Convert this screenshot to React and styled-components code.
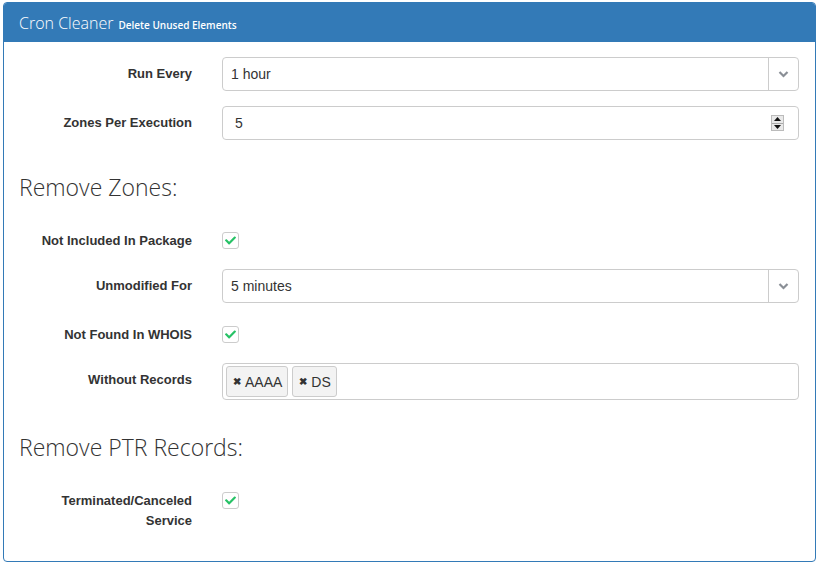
import React from 'react';
import styled, { createGlobalStyle } from 'styled-components';
import { FaCheck } from 'react-icons/fa';

const GlobalStyle = createGlobalStyle`
  body {
    margin: 0;
    background: #ffffff;
    font-family: "Liberation Sans", Arial, sans-serif;
    color: #333333;
  }
`;

const Panel = styled.section`
  margin: 2px 3px 0 3px;
  width: 813px;
  box-sizing: border-box;
  border: 1px solid #337ab7;
  border-radius: 4px;
  background: #ffffff;
  overflow: hidden;
`;

const PanelHeading = styled.header`
  display: flex;
  align-items: baseline;
  gap: 5px;
  height: 39px;
  box-sizing: border-box;
  padding: 9px 15px 0;
  background: #337ab7;
  color: #ffffff;
  font-family: "Open Sans", sans-serif;
`;

const Title = styled.h3`
  margin: 0;
  font-size: 16px;
  font-weight: 300;
`;

const Subtitle = styled.small`
  font-size: 10px;
  font-weight: 600;
`;

const PanelBody = styled.div`
  padding: 15px 16px 15px 15px;
`;

const Row = styled.div`
  display: grid;
  grid-template-columns: 173px 1fr;
  column-gap: 30px;
  align-items: ${(p) => (p.$top ? 'start' : 'center')};
  min-height: ${(p) => (p.$top ? '30px' : '34px')};
  margin-bottom: 15px;
`;

const Label = styled.label`
  text-align: right;
  font-size: 13px;
  font-weight: 700;
  line-height: 20px;
  padding-top: ${(p) => (p.$top ? '7px' : '0')};
`;

const Field = styled.div`
  position: relative;
  display: flex;
  align-items: center;
  height: 34px;
  box-sizing: border-box;
  border: 1px solid #cccccc;
  border-radius: 4px;
  background: #ffffff;
  font-size: 14px;
  color: #333333;
`;

const Value = styled.span`
  flex: 1;
  padding-left: ${(p) => p.$pad || 8}px;
`;

const Arrow = styled.span`
  display: flex;
  align-items: center;
  justify-content: center;
  width: 29px;
  height: 100%;
  border-left: 1px solid #cccccc;
`;

const Spinner = styled.span`
  display: flex;
  flex-direction: column;
  width: 13px;
  height: 16px;
  margin-right: 14px;
  border: 1px solid #bbbbbb;
  background: #e9e9e9;
  box-sizing: border-box;
  & > span {
    flex: 1;
    display: flex;
    align-items: center;
    justify-content: center;
  }
  & > span + span {
    border-top: 1px solid #aaaaaa;
  }
`;

const Heading = styled.h2`
  margin: 34px 0 24px;
  font-family: "Open Sans", sans-serif;
  font-weight: 300;
  font-size: 23px;
  line-height: 26px;
  color: #333333;
`;

const CheckWrap = styled.div`
  padding-top: 8px;
`;

const Check = styled.span`
  display: flex;
  align-items: center;
  justify-content: center;
  width: 17px;
  height: 17px;
  box-sizing: border-box;
  border: 1px solid #cccccc;
  border-radius: 3px;
  color: #27c266;
  font-size: 11px;
`;

const TagBox = styled.div`
  display: flex;
  gap: 4px;
  height: 37px;
  padding: 2px 3px;
  box-sizing: border-box;
  border: 1px solid #cccccc;
  border-radius: 4px;
`;

const Tag = styled.span`
  display: flex;
  align-items: center;
  gap: 4px;
  height: 31px;
  padding: 0 5px 0 6px;
  box-sizing: border-box;
  border: 1px solid #cccccc;
  border-radius: 3px;
  background: #f3f3f3;
  font-size: 14px;
  color: #333333;
  & > b {
    font-size: 10px;
  }
`;

const Chevron = () => (
  <svg width="11" height="8" viewBox="0 0 11 8">
    <path d="M1.5 2 L5.5 6 L9.5 2" fill="none" stroke="#8a8f96" strokeWidth="2.2" />
  </svg>
);

const Tri = ({ up }) => (
  <svg width="7" height="4" viewBox="0 0 7 4">
    <path d={up ? 'M0 4 L3.5 0 L7 4 Z' : 'M0 0 L3.5 4 L7 0 Z'} fill="#111" />
  </svg>
);

const SelectField = ({ value }) => (
  <Field>
    <Value>{value}</Value>
    <Arrow>
      <Chevron />
    </Arrow>
  </Field>
);

const CheckRow = ({ label }) => (
  <Row $top>
    <Label $top>{label}</Label>
    <CheckWrap>
      <Check>
        <FaCheck />
      </Check>
    </CheckWrap>
  </Row>
);

export default function App() {
  return (
    <>
      <GlobalStyle />
      <Panel>
        <PanelHeading>
          <Title>Cron Cleaner</Title>
          <Subtitle>Delete Unused Elements</Subtitle>
        </PanelHeading>
        <PanelBody>
          <Row>
            <Label>Run Every</Label>
            <SelectField value="1 hour" />
          </Row>
          <Row>
            <Label>Zones Per Execution</Label>
            <Field>
              <Value $pad={12}>5</Value>
              <Spinner>
                <span><Tri up /></span>
                <span><Tri /></span>
              </Spinner>
            </Field>
          </Row>

          <Heading>Remove Zones:</Heading>
          <CheckRow label="Not Included In Package" />
          <Row>
            <Label>Unmodified For</Label>
            <SelectField value="5 minutes" />
          </Row>
          <CheckRow label="Not Found In WHOIS" />
          <Row $top>
            <Label $top>Without Records</Label>
            <TagBox>
              <Tag><b>✖</b>AAAA</Tag>
              <Tag><b>✖</b>DS</Tag>
            </TagBox>
          </Row>

          <Heading>Remove PTR Records:</Heading>
          <CheckRow label={<>Terminated/Canceled<br />Service</>} />
        </PanelBody>
      </Panel>
    </>
  );
}
